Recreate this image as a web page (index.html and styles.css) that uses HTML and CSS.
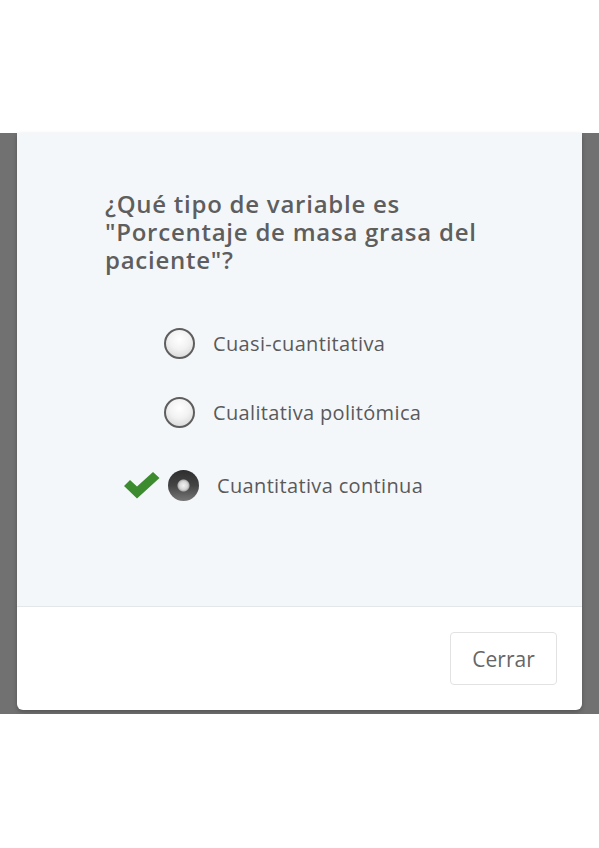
FILE: index.html
```html
<!DOCTYPE html>
<html lang="es">
<head>
<meta charset="utf-8">
<link rel="stylesheet" href="styles.css">
</head>
<body>
<div class="top"></div>
<div class="backdrop">
  <div class="modal">
    <div class="modal-body">
      <h2 class="question">¿Qué tipo de variable es "Porcentaje de masa grasa del paciente"?</h2>
      <div class="options">
        <div class="option">
          <span class="mark"></span>
          <span class="radio"></span>
          <span class="label">Cuasi-cuantitativa</span>
        </div>
        <div class="option">
          <span class="mark"></span>
          <span class="radio"></span>
          <span class="label">Cualitativa politómica</span>
        </div>
        <div class="option option-correct">
          <span class="mark">
            <svg width="36" height="27" viewBox="0 0 36 27"><path d="M0 14 L6 8 L13 14.5 L29 0 L35.5 6 L13 26.5 Z" fill="#3d8b2f"/></svg>
          </span>
          <span class="radio radio-checked"></span>
          <span class="label">Cuantitativa continua</span>
        </div>
      </div>
    </div>
    <div class="modal-footer">
      <button class="btn">Cerrar</button>
    </div>
  </div>
</div>
</body>
</html>
```
FILE: styles.css
```css
html, body {
  margin: 0;
  padding: 0;
  background: #ffffff;
  font-family: "Open Sans", "Noto Sans", sans-serif;
}
.top {
  height: 133px;
}
.backdrop {
  background: #717171;
  height: 581px;
  padding: 0 17px;
  box-sizing: border-box;
}
.modal {
  background: #ffffff;
  border-radius: 0 0 6px 6px;
  box-shadow: 0 2px 4px rgba(0,0,0,0.25);
  overflow: hidden;
}
.modal-body {
  background: #f4f7fa;
  height: 474px;
  box-sizing: border-box;
  padding: 57px 50px 0 88px;
  border-bottom: 1px solid #e4e7ea;
}
.question {
  margin: 0;
  font-size: 24px;
  letter-spacing: 0.75px;
  line-height: 28px;
  font-weight: 600;
  color: #5e5e5e;
}
.options {
  margin-top: 54px;
  display: flex;
  flex-direction: column;
  gap: 38px;
}
.option {
  display: flex;
  align-items: center;
  padding-left: 19px;
}
.mark {
  width: 40px;
  flex: none;
  display: flex;
  align-items: center;
}
.radio {
  width: 27px;
  height: 27px;
  border: 2px solid #5e5e5e;
  border-radius: 50%;
  background: radial-gradient(circle at 50% 35%, #ffffff 0%, #f2f2f2 45%, #cfcfcf 100%);
  flex: none;
}
.label {
  margin-left: 18px;
  font-size: 20px;
  letter-spacing: 0.35px;
  color: #5a5a5a;
}
.option-correct {
  padding-left: 0;
  margin-top: 4px;
}
.option-correct .mark {
  width: 44px;
  margin-left: 19px;
}
.option-correct .label {
  margin-left: 18px;
}
.radio-checked {
  border: none;
  width: 31px;
  height: 31px;
  background:
    radial-gradient(circle at 50% 50%, #f2f2f2 0, #d6d6d6 4px, #b0b0b0 5.5px, rgba(0,0,0,0) 6.5px),
    linear-gradient(180deg, #2e2e2e 0%, #444444 50%, #777777 100%);
}
.modal-footer {
  height: 103px;
  box-sizing: border-box;
  padding: 25px 25px 0 0;
  display: flex;
  justify-content: flex-end;
  align-items: flex-start;
}
.btn {
  width: 107px;
  height: 53px;
  background: #ffffff;
  border: 1px solid #e2e2e2;
  border-radius: 4px;
  font-family: "Open Sans", "Noto Sans", sans-serif;
  font-size: 21px;
  color: #666666;
  padding: 0;
}
```
